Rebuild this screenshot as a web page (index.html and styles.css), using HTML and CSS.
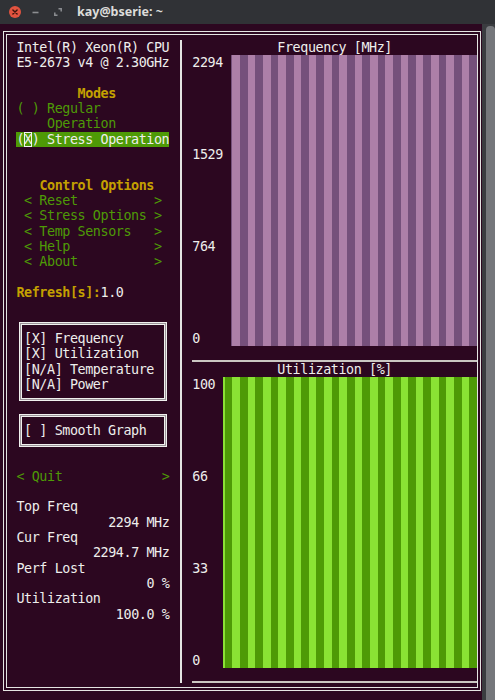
FILE: index.html
```html
<!DOCTYPE html>
<html lang="en">
<head>
<meta charset="utf-8">
<title>kay@bserie: ~</title>
<link rel="stylesheet" href="styles.css">
</head>
<body>
<div class="window">
  <header class="titlebar">
    <span class="wbtn close"><svg width="12" height="12" viewBox="0 0 12 12"><circle cx="6" cy="6" r="6" fill="#e2533f"/><path d="M3.9 3.9l4.2 4.2M8.1 3.9l-4.2 4.2" stroke="#3d140c" stroke-width="1.4" stroke-linecap="round"/></svg></span>
    <span class="wbtn min"><svg width="7" height="12" viewBox="0 0 7 12"><path d="M0.5 6.5h6" stroke="#8c8e92" stroke-width="1.6"/></svg></span>
    <span class="wbtn max"><svg width="8" height="12" viewBox="0 0 8 12"><path d="M4.5 2.8h2.7v2.7M3.5 9.2H0.8V6.5" fill="none" stroke="#8c8e92" stroke-width="1.5"/></svg></span>
    <span class="title">kay@bserie: ~</span>
  </header>
  <div class="term">
    <div class="screen">
      <div class="frame">
        <aside class="side">
          <div class="ln">Intel(R) Xeon(R) CPU</div>
          <div class="ln">E5-2673 v4 @ 2.30GHz</div>
          <div class="ln"></div>
          <div class="ln hd">Modes</div>
          <div class="ln grn">( ) Regular</div>
          <div class="ln grn">    Operation</div>
          <div class="ln"><span class="sel">(<span class="cursor">X</span>) Stress Operation</span></div>
          <div class="ln"></div>
          <div class="ln"></div>
          <div class="ln hd">Control Options</div>
          <div class="ln btn"><span>&lt; Reset</span><span>&gt;</span></div>
          <div class="ln btn"><span>&lt; Stress Options</span><span>&gt;</span></div>
          <div class="ln btn"><span>&lt; Temp Sensors</span><span>&gt;</span></div>
          <div class="ln btn"><span>&lt; Help</span><span>&gt;</span></div>
          <div class="ln btn"><span>&lt; About</span><span>&gt;</span></div>
          <div class="ln"></div>
          <div class="ln"><b class="yl">Refresh[s]:</b>1.0</div>
          <div class="ln"></div>
          <div class="box">
            <div class="ln">[X] Frequency</div>
            <div class="ln">[X] Utilization</div>
            <div class="ln">[N/A] Temperature</div>
            <div class="ln">[N/A] Power</div>
          </div>
          <div class="box">
            <div class="ln">[ ] Smooth Graph</div>
          </div>
          <div class="ln"></div>
          <div class="ln btn quit"><span>&lt; Quit</span><span>&gt;</span></div>
          <div class="ln"></div>
          <div class="ln">Top Freq</div>
          <div class="ln val">2294 MHz</div>
          <div class="ln">Cur Freq</div>
          <div class="ln val">2294.7 MHz</div>
          <div class="ln">Perf Lost</div>
          <div class="ln val">0 %</div>
          <div class="ln">Utilization</div>
          <div class="ln val">100.0 %</div>
        </aside>
        <div class="vline"></div>
        <main class="graphs">
          <section class="graph">
            <div class="ln gtitle">Frequency [MHz]</div>
            <div class="plot">
              <div class="axis w5"><span>2294</span><span>1529</span><span>764</span><span>0</span></div>
              <div class="bars freq"></div>
            </div>
            <div class="ln gfoot"></div>
          </section>
          <section class="graph">
            <div class="ln gtitle">Utilization [%]</div>
            <div class="plot">
              <div class="axis w4"><span>100</span><span>66</span><span>33</span><span>0</span></div>
              <div class="bars util"></div>
            </div>
            <div class="ln gfoot"></div>
          </section>
        </main>
      </div>
    </div>
    <div class="scroll"><div class="thumb"></div></div>
  </div>
</div>
</body>
</html>
```

FILE: styles.css
```css
:root {
  --cw: 7.645px;
  --rh: 15.33px;
  --bg: #2c0720;
  --fg: #eeeeec;
  --yl: #c4a000;
  --gr: #4e9a06;
  --line: #e4e4e2;
}

* { box-sizing: border-box; }

html, body {
  margin: 0;
  padding: 0;
  background: var(--bg);
}

body {
  width: 495px;
  height: 700px;
  overflow: hidden;
}

.window {
  display: flex;
  flex-direction: column;
  height: 700px;
}

/* ---------- title bar ---------- */
.titlebar {
  height: 24px;
  flex: none;
  background: #303236;
  display: flex;
  align-items: center;
  padding-left: 9px;
}

.wbtn { display: flex; align-items: center; }
.close { margin-right: 11px; }
.min { margin-right: 15px; }
.max { margin-right: 15px; }

.title {
  font-family: "Noto Sans", "Liberation Sans", sans-serif;
  font-weight: 700;
  font-size: 12.5px;
  color: #dcdcda;
  line-height: 24px;
}

/* ---------- terminal ---------- */
.term {
  flex: 1;
  display: flex;
  background: var(--bg);
}

.screen {
  flex: 1;
  padding: 7px 0 0 3px;
}

.frame {
  width: 478px;
  border: 4px double var(--line);
  padding: 4.63px 0 3.2px 1.825px;
  display: flex;
  font-family: "DejaVu Sans Mono", monospace;
  font-size: 13.4px;
  letter-spacing: calc(7.645px - 13.4px * 0.60205);
  color: var(--fg);
}

.ln {
  height: var(--rh);
  line-height: var(--rh);
  white-space: pre;
  flex: none;
}

/* ---------- left panel ---------- */
.side {
  width: calc(22 * var(--cw));
  padding-left: var(--cw);
  flex: none;
  display: flex;
  flex-direction: column;
  align-items: flex-start;
}

.hd {
  width: calc(21 * var(--cw));
  text-align: center;
  color: var(--yl);
  font-weight: 700;
}

.yl { color: var(--yl); font-weight: 700; }
.grn { color: var(--gr); }

.sel {
  display: inline-block;
  width: calc(20 * var(--cw));
  height: var(--rh);
  background: var(--gr);
  color: var(--fg);
}

.cursor {
  display: inline-block;
  height: var(--rh);
  width: var(--cw);
  outline: 1px solid #f2f2f0;
  outline-offset: -1px;
}

.btn {
  display: flex;
  justify-content: space-between;
  width: calc(18 * var(--cw));
  margin-left: var(--cw);
  color: var(--gr);
}

.btn.quit {
  width: calc(20 * var(--cw));
  margin-left: 0;
}

.val {
  width: calc(20 * var(--cw));
  text-align: right;
}

.box {
  flex: none;
  width: calc(19 * var(--cw) + 3px);
  margin: calc(var(--rh) / 2 - 1.5px) 0 calc(var(--rh) / 2 - 1.5px) calc(var(--cw) / 2 - 1.5px);
  padding: calc(var(--rh) / 2 - 1.5px) 0 calc(var(--rh) / 2 - 1.5px) calc(var(--cw) / 2 - 1.5px);
  border: 3px double #f0f0ee;
  background: linear-gradient(var(--bg), var(--bg)) padding-box, linear-gradient(#9b9499, #9b9499) border-box;
}

.vline {
  width: var(--cw);
  flex: none;
  background: linear-gradient(var(--line), var(--line)) center / 2px 100% no-repeat;
}

/* ---------- graphs ---------- */
.graphs {
  flex: 1;
  padding-left: var(--cw);
  display: flex;
  flex-direction: column;
}

.gtitle { text-align: center; }

.plot {
  display: flex;
  height: calc(19 * var(--rh));
  flex: none;
}

.axis {
  display: flex;
  flex-direction: column;
  justify-content: space-between;
  flex: none;
}

.axis span {
  height: var(--rh);
  line-height: var(--rh);
}

.axis.w5 { width: calc(5 * var(--cw)); }
.axis.w4 { width: calc(4 * var(--cw)); }

.bars { flex: 1; }

.bars.freq {
  background: repeating-linear-gradient(to left, #75507b 0 var(--cw), #ad7fa8 var(--cw) calc(2 * var(--cw)));
}

.bars.util {
  background: repeating-linear-gradient(to left, #4e9a06 0 var(--cw), #8ae234 var(--cw) calc(2 * var(--cw)));
}

.gfoot {
  background: linear-gradient(#cbc7c2, #cbc7c2) left bottom / 100% 2px no-repeat;
}

/* ---------- scrollbar ---------- */
.scroll {
  width: 13px;
  flex: none;
  background: #3a3c40;
  padding: 2px 0 0 4px;
}

.thumb {
  height: 100%;
  background: #75777b;
  border-radius: 4px 4px 0 0;
}
```
